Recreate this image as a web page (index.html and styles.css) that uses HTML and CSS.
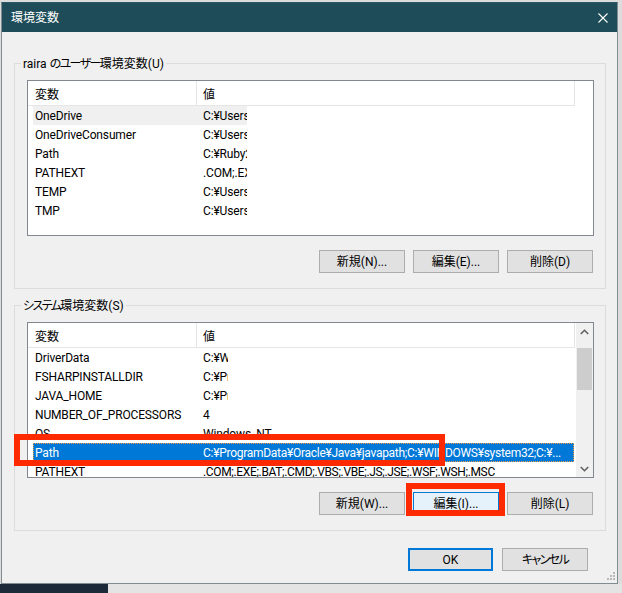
FILE: index.html
```html
<!DOCTYPE html>
<html lang="ja">
<head>
<meta charset="utf-8">
<title>環境変数</title>
<link rel="stylesheet" href="styles.css">
</head>
<body>
<div class="window">
  <div class="titlebar">
    <span class="title">環境変数</span>
    <span class="close"><svg width="10" height="10" viewBox="0 0 10 10"><path d="M0.5 0.5 L9.5 9.5 M9.5 0.5 L0.5 9.5" stroke="#fff" stroke-width="1.1" fill="none"/></svg></span>
  </div>
  <div class="content">
    <fieldset class="group g1">
      <legend>raira <span class="kana">のユーザー</span>環境変数(U)</legend>
      <div class="list">
        <div class="list-main">
          <div class="head"><div class="hcol hname">変数</div><div class="hcol hval">値</div></div>
          <div class="row hover"><span class="name">OneDrive</span><span class="val clip-a">C:¥Users¥raira¥OneDrive</span></div>
          <div class="row"><span class="name">OneDriveConsumer</span><span class="val clip-a">C:¥Users¥raira¥OneDrive</span></div>
          <div class="row"><span class="name">Path</span><span class="val clip-a">C:¥Ruby26-x64¥bin;C:¥Users</span></div>
          <div class="row"><span class="name">PATHEXT</span><span class="val clip-a">.COM;.EXE;.BAT;.CMD</span></div>
          <div class="row"><span class="name">TEMP</span><span class="val clip-a">C:¥Users¥raira¥AppData¥Local¥Temp</span></div>
          <div class="row"><span class="name">TMP</span><span class="val clip-a">C:¥Users¥raira¥AppData¥Local¥Temp</span></div>
        </div>
      </div>
      <div class="btns">
        <button class="btn">新規(N)...</button>
        <button class="btn">編集(E)...</button>
        <button class="btn">削除(D)</button>
      </div>
    </fieldset>
    <fieldset class="group g2">
      <legend><span class="kana">システム</span>環境変数(S)</legend>
      <div class="list">
        <div class="list-main">
          <div class="head"><div class="hcol hname">変数</div><div class="hcol hval">値</div></div>
          <div class="row"><span class="name">DriverData</span><span class="val clip-b">C:¥Windows¥System32¥Drivers¥DriverData</span></div>
          <div class="row"><span class="name">FSHARPINSTALLDIR</span><span class="val clip-b">C:¥Program Files (x86)¥Microsoft SDKs¥F#</span></div>
          <div class="row"><span class="name">JAVA_HOME</span><span class="val clip-b">C:¥Program Files¥Java¥jdk</span></div>
          <div class="row"><span class="name">NUMBER_OF_PROCESSORS</span><span class="val">4</span></div>
          <div class="row"><span class="name">OS</span><span class="val">Windows_NT</span></div>
          <div class="row sel"><span class="name">Path</span><span class="val long">C:¥ProgramData¥Oracle¥Java¥javapath;C:¥WINDOWS¥system32;C:¥...</span></div>
          <div class="row"><span class="name">PATHEXT</span><span class="val ext">.COM;.EXE;.BAT;.CMD;.VBS;.VBE;.JS;.JSE;.WSF;.WSH;.MSC</span></div>
        </div>
        <div class="scrollbar">
          <div class="arrow"><svg width="9" height="6" viewBox="0 0 9 6"><path d="M0.8 5 L4.5 1.3 L8.2 5" stroke="#606060" stroke-width="1.6" fill="none"/></svg></div>
          <div class="track"><div class="thumb"></div></div>
          <div class="arrow"><svg width="9" height="6" viewBox="0 0 9 6"><path d="M0.8 1 L4.5 4.7 L8.2 1" stroke="#606060" stroke-width="1.6" fill="none"/></svg></div>
        </div>
      </div>
      <div class="btns">
        <button class="btn">新規(W)...</button>
        <button class="btn hot">編集(I)...</button>
        <button class="btn">削除(L)</button>
      </div>
    </fieldset>
    <div class="footer">
      <button class="btn ok">OK</button>
      <button class="btn cancel">キャンセル</button>
    </div>
  </div>
  <svg class="grip" width="9" height="9" viewBox="0 0 9 9" fill="#b9b9b9">
    <rect x="6" y="0" width="2" height="2"/>
    <rect x="3" y="3" width="2" height="2"/><rect x="6" y="3" width="2" height="2"/>
    <rect x="0" y="6" width="2" height="2"/><rect x="3" y="6" width="2" height="2"/><rect x="6" y="6" width="2" height="2"/>
  </svg>
</div>
<div class="desk-bottom"><div class="navy"></div></div>
<div class="annot a1"></div>
<div class="annot a2"></div>
</body>
</html>
```

FILE: styles.css
```css
* { box-sizing: border-box; }

html, body {
  margin: 0;
  padding: 0;
}

body {
  width: 622px;
  height: 593px;
  overflow: hidden;
  position: relative;
  background: #dcdcdc;
  font-family: Roboto, "Noto Sans CJK JP", sans-serif;
  font-size: 12px;
  color: #000;
  font-feature-settings: "palt";
}

.window {
  position: relative;
  margin: 2px 0 0 1px;
  width: 617px;
  height: 582px;
  border: 1px solid #7f8c91;
  border-top-color: #2b5866;
  background: #f0f0f0;
  display: flex;
  flex-direction: column;
}

.titlebar {
  height: 29px;
  flex: none;
  background: #1e4d59;
  color: #fff;
  display: flex;
  align-items: center;
  padding-left: 9px;
}

.title {
  line-height: 16px;
  padding-top: 1px;
}

.close {
  margin-left: auto;
  width: 28px;
  height: 29px;
  display: flex;
  align-items: center;
  justify-content: center;
  padding-top: 1px;
}

.content {
  padding: 0 11px 0 12px;
  display: flex;
  flex-direction: column;
}

.group {
  margin: 0;
  border: 1px solid #dcdcdc;
  padding: 8px 11px 15px 12px;
  min-width: 0;
}

.g1 { margin-top: 23px; }
.g2 { margin-top: 8px; }

.group legend {
  height: 17px;
  line-height: 19px;
  padding: 0 2px;
  margin-left: -6px;
  white-space: nowrap;
}

.kana { letter-spacing: -1.6px; }

.list {
  height: 156px;
  border: 1px solid #828790;
  background: #fff;
  display: flex;
  overflow: hidden;
}

.list-main {
  flex: 1;
  overflow: hidden;
}

.head {
  display: flex;
  width: 547px;
  height: 25px;
  border-bottom: 1px solid #e5e5e5;
}

.hcol {
  height: 24px;
  line-height: 24px;
  padding-top: 2px;
  border-right: 1px solid #e5e5e5;
}

.hname { width: 169px; padding-left: 7px; }
.hval { width: 378px; padding-left: 6px; }

.row {
  display: flex;
  margin-left: 5px;
  width: 541px;
  height: 19px;
  white-space: nowrap;
  letter-spacing: -0.15px;
}

.name {
  width: 163px;
  flex: none;
  padding-left: 2px;
  padding-top: 1px;
  line-height: 19px;
  overflow: hidden;
}

.val {
  flex: 1;
  padding-left: 7px;
  padding-top: 1px;
  line-height: 19px;
  overflow: hidden;
}

.val.clip-a { flex: none; width: 51px; }
.val.clip-b { flex: none; width: 32px; }
.val.ext { letter-spacing: -0.35px; }
.val.long { letter-spacing: -0.28px; }

.row.hover .name,
.row.hover .val { background: #f0f0f0; }

.row.sel {
  background: #0078d7;
  color: #fff;
  outline: 1px dotted #f0a040;
  outline-offset: -1px;
}

.scrollbar {
  width: 17px;
  flex: none;
  background: #f0f0f0;
  display: flex;
  flex-direction: column;
}

.arrow {
  height: 17px;
  flex: none;
  display: flex;
  align-items: center;
  justify-content: center;
}

.track {
  flex: 1;
  padding: 8px 1px 0 1px;
}

.thumb {
  height: 42px;
  background: #cdcdcd;
}

.btns {
  display: flex;
  justify-content: flex-end;
  gap: 8px;
  margin-top: 14px;
  margin-right: 1px;
}

.btn {
  width: 86px;
  height: 23px;
  margin: 0;
  padding: 0;
  border: 1px solid #adadad;
  background: #e1e1e1;
  font: inherit;
  color: #000;
  line-height: 20px;
  text-align: center;
}

.btn.hot {
  background: #e5f1fb;
  border-color: #0078d7;
}

.btn.cancel { letter-spacing: -1.6px; }

.footer {
  display: flex;
  justify-content: flex-end;
  gap: 9px;
  margin-top: 17px;
  margin-right: 18px;
}

.btn.ok {
  width: 85px;
  border: 2px solid #0078d7;
}

.grip {
  position: absolute;
  right: 1px;
  bottom: 2px;
}

.desk-bottom {
  height: 9px;
  background: #e4e4e4;
  display: flex;
}

.navy {
  width: 108px;
  background: #1b2939;
}

.annot {
  position: absolute;
  border: 6px solid #ff2a00;
}

.a1 { left: 14px; top: 434px; width: 431px; height: 32px; }
.a2 { left: 406px; top: 483px; width: 99px; height: 33px; }
```
